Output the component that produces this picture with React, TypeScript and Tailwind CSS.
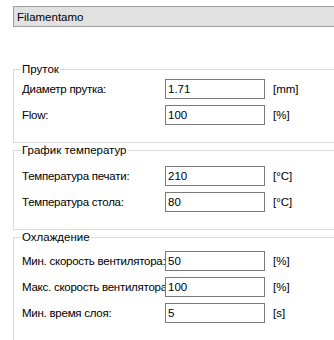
import React from "react";

type Row = { label: string; value: string; unit: string };

function Field({ label, value, unit }: Row) {
  return (
    <div className="flex items-center h-[20px]">
      <div className="w-[143px] whitespace-nowrap overflow-hidden text-black tracking-[-0.25px]">{label}</div>
      <div className="w-[100px] h-[20px] border border-[#7a7a7a] bg-white flex items-center pl-[2px] text-black">
        {value}
      </div>
      <div className="ml-[8px] text-black">{unit}</div>
    </div>
  );
}

function Group({
  title,
  rows,
  pt,
  h,
  mt,
}: {
  title: string;
  rows: Row[];
  pt: string;
  h: string;
  mt: string;
}) {
  return (
    <div className={`relative w-[340px] border border-[#dcdcdc] ${h} ${mt}`}>
      <div className="absolute -top-[8px] left-[7px] bg-white px-[1px] leading-[14px] text-black">{title}</div>
      <div className={`flex flex-col gap-[6px] pl-[8px] ${pt}`}>
        {rows.map((r) => (
          <Field key={r.label} {...r} />
        ))}
      </div>
    </div>
  );
}

export default function App() {
  return (
    <div
      className="w-[334px] h-[340px] overflow-hidden bg-white pt-[6px] pl-[13px] text-[11.5px] leading-[14px]"
      style={{ fontFamily: '"Liberation Sans", Arial, sans-serif' }}
    >
      <div className="w-[330px] h-[21px] border border-r-0 border-[#a0a0a0] bg-[#e1e1e1] flex items-center pl-[3px] text-black">
        Filamentamo
      </div>
      <Group
        title="Пруток"
        mt="mt-[42px]"
        h="h-[74px]"
        pt="pt-[9px]"
        rows={[
          { label: "Диаметр прутка:", value: "1.71", unit: "[mm]" },
          { label: "Flow:", value: "100", unit: "[%]" },
        ]}
      />
      <Group
        title="График температур"
        mt="mt-[7px]"
        h="h-[80px]"
        pt="pt-[15px]"
        rows={[
          { label: "Температура печати:", value: "210", unit: "[°C]" },
          { label: "Температура стола:", value: "80", unit: "[°C]" },
        ]}
      />
      <Group
        title="Охлаждение"
        mt="mt-[7px]"
        h="h-[120px]"
        pt="pt-[13px]"
        rows={[
          { label: "Мин. скорость вентилятора:", value: "50", unit: "[%]" },
          { label: "Макс. скорость вентилятора:", value: "100", unit: "[%]" },
          { label: "Мин. время слоя:", value: "5", unit: "[s]" },
        ]}
      />
    </div>
  );
}
